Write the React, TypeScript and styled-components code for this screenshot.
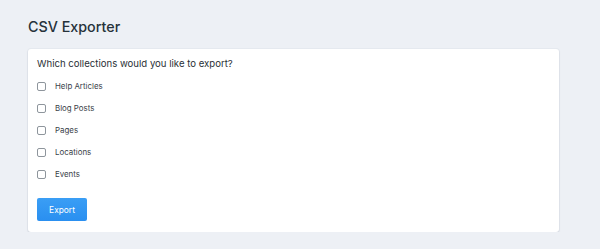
import React from "react";
import styled, { createGlobalStyle } from "styled-components";

const Global = createGlobalStyle`
  html, body { margin: 0; padding: 0; }
  body {
    background: #edf0f5;
    font-family: Inter, "Noto Sans", sans-serif;
    color: #2b3238;
  }
`;

const Page = styled.div`
  padding: 18px 41px 0 28px;
  display: flex;
  flex-direction: column;
`;

const Title = styled.h1`
  margin: 0 0 14px;
  font-size: 14.3px;
  line-height: 17px;
  font-weight: 500;
  color: #26323a;
`;

const Card = styled.div`
  background: #fff;
  border-radius: 3px;
  box-shadow: 0 1px 2px rgba(40, 50, 80, 0.14), 0 0 0 1px rgba(40, 50, 80, 0.03);
  padding: 8px 9px 9px 9px;
  height: 166px;
`;

const Question = styled.p`
  margin: 0 0 4px;
  font-size: 9.6px;
  line-height: 14px;
  color: #2a3036;
`;

const List = styled.div`
  display: flex;
  flex-direction: column;
`;

const Option = styled.label`
  display: flex;
  align-items: center;
  height: 22px;
  gap: 9px;
  font-size: 7.9px;
  color: #3a4249;
`;

const Box = styled.span`
  width: 7px;
  height: 7px;
  border: 1px solid #8e959c;
  border-radius: 2px;
  background: #fff;
`;

const Button = styled.button`
  margin-top: 13px;
  width: 50px;
  height: 23px;
  border: none;
  border-radius: 2px;
  background: linear-gradient(#3a9ef5, #2a8ff0);
  color: #fff;
  font-family: Inter, sans-serif;
  font-size: 8.4px;
  padding: 0;
`;

const items = ["Help Articles", "Blog Posts", "Pages", "Locations", "Events"];

export default function App() {
  return (
    <>
      <Global />
      <Page>
        <Title>CSV Exporter</Title>
        <Card>
          <Question>Which collections would you like to export?</Question>
          <List>
            {items.map((t) => (
              <Option key={t}>
                <Box />
                {t}
              </Option>
            ))}
          </List>
          <Button>Export</Button>
        </Card>
      </Page>
    </>
  );
}
